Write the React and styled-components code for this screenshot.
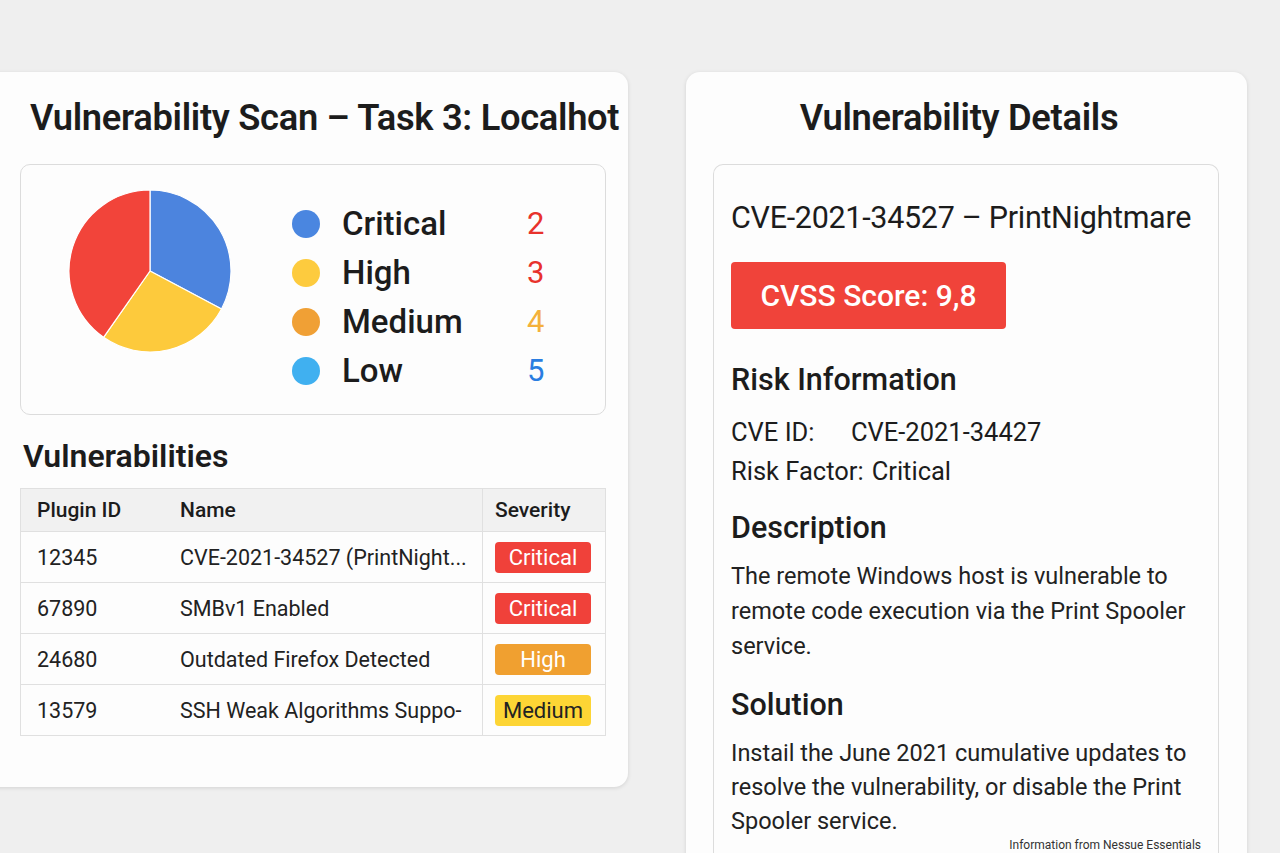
import styled, { createGlobalStyle } from "styled-components";

const GlobalStyle = createGlobalStyle`
  html, body {
    margin: 0;
    padding: 0;
    background: #efefef;
    font-family: Roboto, "Liberation Sans", Arial, sans-serif;
    color: #1c1c1c;
    overflow: hidden;
  }
`

const Page = styled.div`
  display: flex;
  align-items: flex-start;
  gap: 58px;
  padding-top: 72px;
  height: 781px;
  overflow: hidden;
`

const ScanCard = styled.section`
  width: 654px;
  margin-left: -26px;
  box-sizing: border-box;
  padding: 24px 22px 51px 46px;
  background: #fdfdfd;
  border-radius: 14px;
  box-shadow: 0 1px 4px rgba(0, 0, 0, 0.12);
`

const DetailsCard = styled.section`
  width: 561px;
  box-sizing: border-box;
  padding: 24px 28px 0 27px;
  background: #fdfdfd;
  border-radius: 14px;
  box-shadow: 0 1px 4px rgba(0, 0, 0, 0.12);
  min-height: 820px;
`

const CardTitle = styled.h1`
  margin: 0 0 24px;
  font-size: 36.3px;
  font-weight: 600;
  line-height: 44px;
  letter-spacing: -0.3px;
  white-space: nowrap;
  text-align: ${p => (p.$center ? "center" : "left")};
  padding-left: ${p => (p.$center ? "0" : "10px")};
  padding-right: ${p => (p.$center ? "14px" : "0")};
`

const ChartBox = styled.div`
  display: flex;
  align-items: flex-start;
  height: 251px;
  box-sizing: border-box;
  border: 1px solid #dcdcdc;
  border-radius: 10px;
  padding: 24px 0 0 47px;
  gap: 60px;
`

const Legend = styled.div`
  display: grid;
  grid-template-columns: 50px 185px auto;
  row-gap: 12px;
  align-items: center;
  margin-top: 16px;
`

const Dot = styled.span`
  width: 28px;
  height: 28px;
  border-radius: 50%;
  background: ${p => p.$color};
`

const LegendLabel = styled.span`
  font-size: 33px;
  font-weight: 500;
  line-height: 37px;
`

const LegendCount = styled.span`
  font-size: 31px;
  line-height: 37px;
  color: ${p => p.$color};
`

const SectionTitle = styled.h2`
  margin: 22px 0 13px 3px;
  font-size: 32px;
  font-weight: 600;
  line-height: 38px;
`

const Table = styled.table`
  width: 100%;
  border-collapse: collapse;
  border: 1px solid #e0e0e0;
  font-size: 21.5px;
`

const HeadCell = styled.th`
  background: #f1f1f1;
  height: 42px;
  text-align: left;
  font-weight: 500;
  font-size: 21px;
  padding: 0 0 0 ${p => p.$pad || 16}px;
  border-bottom: 1px solid #e0e0e0;
  border-left: ${p => (p.$sep ? "1px solid #e0e0e0" : "none")};
  width: ${p => p.$w || "auto"};
`

const Cell = styled.td`
  height: 50px;
  padding: 0 0 0 ${p => p.$pad || 16}px;
  border-bottom: 1px solid #e0e0e0;
  border-left: ${p => (p.$sep ? "1px solid #e0e0e0" : "none")};
  white-space: nowrap;
  color: #222;
`

const Badge = styled.span`
  display: inline-block;
  width: 96px;
  height: 31px;
  line-height: 31px;
  text-align: center;
  border-radius: 4px;
  font-size: 22px;
  color: ${p => p.$text || "#fff"};
  background: ${p => p.$bg};
`

const InnerBox = styled.div`
  border: 1px solid #dcdcdc;
  border-bottom: none;
  border-radius: 10px 10px 0 0;
  padding: 34px 17px 0 17px;
  min-height: 700px;
`

const CveTitle = styled.div`
  font-size: 30.5px;
  font-weight: 400;
  line-height: 38px;
  letter-spacing: -0.3px;
`

const ScoreButton = styled.div`
  width: 275px;
  height: 67px;
  margin: 25px 0 32px;
  background: #f0433a;
  border-radius: 4px;
  color: #fff;
  font-size: 30px;
  font-weight: 500;
  display: flex;
  align-items: center;
  justify-content: center;
`

const SubTitle = styled.h3`
  margin: 0;
  font-size: 30.5px;
  font-weight: 500;
  line-height: 38px;
`

const InfoRow = styled.div`
  display: flex;
  font-size: 25.5px;
  line-height: 39px;
  margin-top: ${p => p.$top || 0}px;
`

const InfoKey = styled.span`
  width: ${p => p.$w || "auto"};
  padding-right: 8px;
`

const Para = styled.p`
  margin: 12px 0 ${p => (p.$last ? 0 : 22)}px;
  font-size: 23.5px;
  line-height: ${p => (p.$last ? 34 : 35)}px;
  color: #222;
`

const Source = styled.div`
  text-align: right;
  font-size: 12px;
  line-height: 14px;
  color: #333;
`

const Pie = () => {
  const cx = 82, cy = 82, r = 81;
  const pt = deg => {
    const a = (deg - 90) * Math.PI / 180;
    return [cx + r * Math.cos(a), cy + r * Math.sin(a)];
  };
  const slice = (a0, a1, color) => {
    const [x0, y0] = pt(a0);
    const [x1, y1] = pt(a1);
    const large = a1 - a0 > 180 ? 1 : 0;
    return <path d={`M${cx},${cy} L${x0},${y0} A${r},${r} 0 ${large} 1 ${x1},${y1} Z`} fill={color} stroke="#fff" strokeWidth="1.2" />;
  };
  return (
    <svg width="164" height="164" viewBox="0 0 164 164">
      {slice(0, 118, "#4c84de")}
      {slice(118, 215, "#fdca3c")}
      {slice(215, 360, "#f2443a")}
    </svg>
  );
};

const legend = [
  { label: "Critical", count: 2, dot: "#4a86e0", color: "#e8322c" },
  { label: "High", count: 3, dot: "#fdcb3e", color: "#e8322c" },
  { label: "Medium", count: 4, dot: "#f0a035", color: "#f4b13b" },
  { label: "Low", count: 5, dot: "#40b0f0", color: "#2a7de1" },
];

const rows = [
  { id: "12345", name: "CVE-2021-34527 (PrintNight...", sev: "Critical", bg: "#f0413a" },
  { id: "67890", name: "SMBv1 Enabled", sev: "Critical", bg: "#f0413a" },
  { id: "24680", name: "Outdated Firefox Detected", sev: "High", bg: "#f0a030" },
  { id: "13579", name: "SSH Weak Algorithms Suppo-", sev: "Medium", bg: "#fdd535", text: "#222" },
];

export default function App() {
  return (
    <>
      <GlobalStyle />
      <Page>
        <ScanCard>
          <CardTitle>Vulnerability Scan – Task 3: Localhot</CardTitle>
          <ChartBox>
            <Pie />
            <Legend>
              {legend.map(l => [
                <Dot key={l.label + "d"} $color={l.dot} />,
                <LegendLabel key={l.label}>{l.label}</LegendLabel>,
                <LegendCount key={l.label + "c"} $color={l.color}>{l.count}</LegendCount>,
              ])}
            </Legend>
          </ChartBox>
          <SectionTitle>Vulnerabilities</SectionTitle>
          <Table>
            <thead>
              <tr>
                <HeadCell $w="127px">Plugin ID</HeadCell>
                <HeadCell>Name</HeadCell>
                <HeadCell $sep $pad={12} $w="110px">Severity</HeadCell>
              </tr>
            </thead>
            <tbody>
              {rows.map(r => (
                <tr key={r.id}>
                  <Cell>{r.id}</Cell>
                  <Cell>{r.name}</Cell>
                  <Cell $sep $pad={12}>
                    <Badge $bg={r.bg} $text={r.text}>{r.sev}</Badge>
                  </Cell>
                </tr>
              ))}
            </tbody>
          </Table>
        </ScanCard>
        <DetailsCard>
          <CardTitle $center>Vulnerability Details</CardTitle>
          <InnerBox>
            <CveTitle>CVE-2021-34527 – PrintNightmare</CveTitle>
            <ScoreButton>CVSS Score: 9,8</ScoreButton>
            <SubTitle>Risk Information</SubTitle>
            <InfoRow $top={14}>
              <InfoKey $w="112px">CVE ID:</InfoKey>
              <span>CVE-2021-34427</span>
            </InfoRow>
            <InfoRow>
              <InfoKey>Risk Factor:</InfoKey>
              <span>Critical</span>
            </InfoRow>
            <SubTitle style={{ marginTop: 18 }}>Description</SubTitle>
            <Para>The remote Windows host is vulnerable to remote code execution via the Print Spooler service.</Para>
            <SubTitle>Solution</SubTitle>
            <Para $last>Instail the June 2021 cumulative updates to resolve the vulnerability, or disable the Print Spooler service.</Para>
            <Source>Information from Nessue Essentials</Source>
          </InnerBox>
        </DetailsCard>
      </Page>
    </>
  );
}
